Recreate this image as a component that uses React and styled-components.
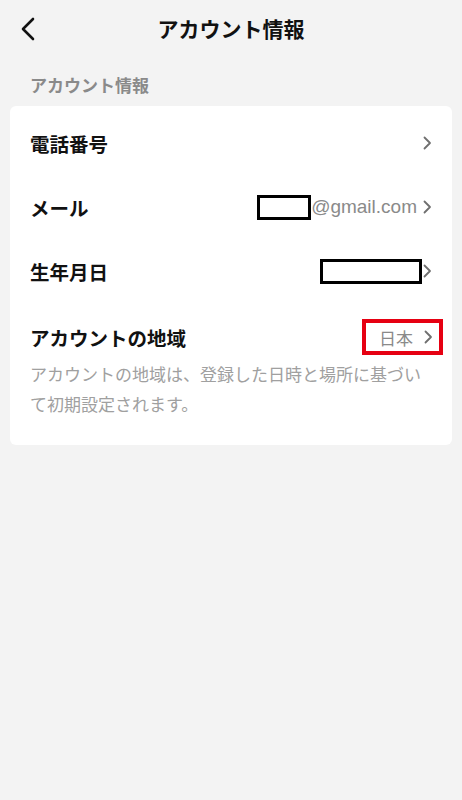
import React from "react";
import styled, { createGlobalStyle } from "styled-components";

const GlobalStyle = createGlobalStyle`
  html, body {
    margin: 0;
    padding: 0;
    background: #f3f3f3;
    font-family: "Noto Sans CJK JP", "Noto Sans", sans-serif;
  }
`;

const Page = styled.div`
  min-height: 800px;
  background: #f3f3f3;
`;

const Header = styled.div`
  position: relative;
  height: 56px;
  display: flex;
  align-items: center;
  justify-content: center;
`;

const BackButton = styled.button`
  position: absolute;
  left: 14px;
  top: 14px;
  width: 28px;
  height: 30px;
  padding: 0;
  border: none;
  background: transparent;
  display: flex;
  align-items: center;
  justify-content: center;
`;

const Title = styled.div`
  font-size: 21px;
  font-weight: 700;
  color: #111;
`;

const SectionLabel = styled.div`
  padding: 17px 30px 9px;
  font-size: 17px;
  font-weight: 700;
  color: #8a8a8a;
  line-height: 24px;
`;

const Card = styled.div`
  margin: 0 10px;
  background: #fff;
  border-radius: 6px;
  padding: 5px 0 26px;
`;

const Row = styled.div`
  display: flex;
  align-items: center;
  justify-content: space-between;
  height: 64px;
  padding: 0 20px;
`;

const Label = styled.div`
  font-size: 19.5px;
  font-weight: 700;
  color: #111;
`;

const Right = styled.div`
  display: flex;
  align-items: center;
  gap: ${({ $gap }) => $gap || 0}px;
`;

const Value = styled.span`
  display: flex;
  align-items: center;
  font-family: ${({ $latin }) => ($latin ? '"Liberation Sans", Arial' : '"Noto Sans CJK JP"')}, sans-serif;
  font-size: ${({ $latin }) => ($latin ? 19 : 17)}px;
  color: #8a8a8a;
`;

const Masked = styled.span`
  display: inline-block;
  box-sizing: border-box;
  width: ${({ $w }) => $w}px;
  height: 25px;
  border: 3px solid #000;
  background: #fff;
`;

const Highlight = styled.div`
  display: flex;
  align-items: center;
  gap: 10px;
  box-sizing: border-box;
  height: 36px;
  padding: 0 6px 0 13px;
  margin-right: -11px;
  border: 4px solid #e60012;
`;

const RegionRow = styled.div`
  padding: 0 20px;
`;

const RegionHead = styled.div`
  display: flex;
  align-items: center;
  justify-content: space-between;
  height: 36px;
  margin-top: 16px;
`;

const Note = styled.div`
  max-width: 400px;
  font-size: 17px;
  line-height: 30px;
  color: #a0a0a0;
  margin-top: 4px;
`;

const Chevron = () => (
  <svg width="10" height="14" viewBox="0 0 10 14">
    <path d="M2.5 1.5 L8 7 L2.5 12.5" fill="none" stroke="#6f6f6f" strokeWidth="1.8" strokeLinecap="round" strokeLinejoin="round" />
  </svg>
);

const BackIcon = () => (
  <svg width="16" height="24" viewBox="0 0 16 24">
    <path d="M13 2 L3 12 L13 22" fill="none" stroke="#111" strokeWidth="2.6" strokeLinecap="round" strokeLinejoin="round" />
  </svg>
);

const App = () => {
  return (
    <Page>
      <GlobalStyle />
      <Header>
        <BackButton>
          <BackIcon />
        </BackButton>
        <Title>アカウント情報</Title>
      </Header>

      <SectionLabel>アカウント情報</SectionLabel>

      <Card>
        <Row>
          <Label>電話番号</Label>
          <Chevron />
        </Row>
        <Row>
          <Label>メール</Label>
          <Right $gap={5}>
            <Value $latin>
              <Masked $w={54} />
              @gmail.com
            </Value>
            <Chevron />
          </Right>
        </Row>
        <Row>
          <Label>生年月日</Label>
          <Right $gap={0}>
            <Masked $w={102} />
            <Chevron />
          </Right>
        </Row>
        <RegionRow>
          <RegionHead>
            <Label>アカウントの地域</Label>
            <Highlight>
              <Value>日本</Value>
              <Chevron />
            </Highlight>
          </RegionHead>
          <Note>
            アカウントの地域は、登録した日時と場所に基づいて初期設定されます。
          </Note>
        </RegionRow>
      </Card>
    </Page>
  );
};

export default App;
